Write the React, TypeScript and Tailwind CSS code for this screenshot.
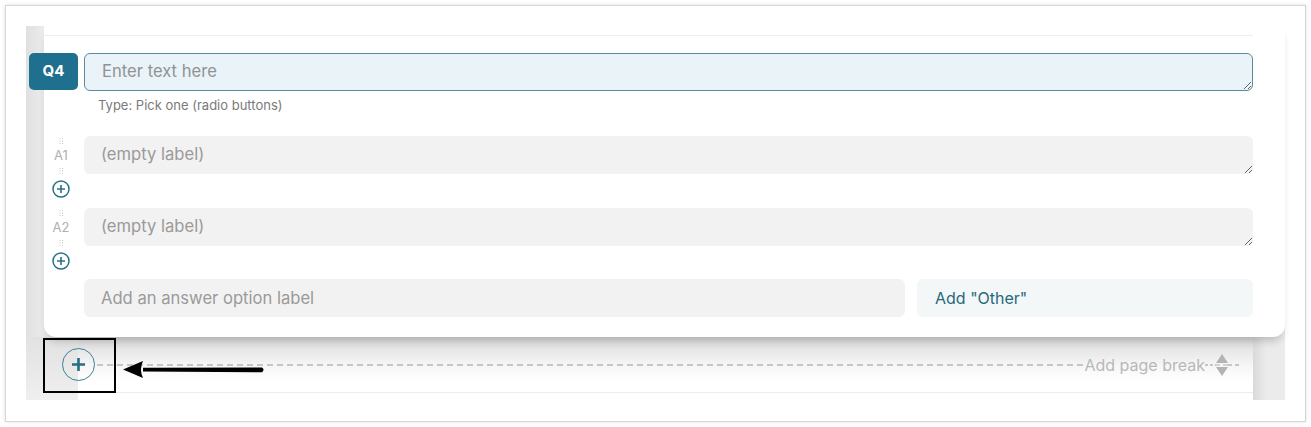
import React from "react";

const FONT = { fontFamily: "Inter, 'Liberation Sans', sans-serif" };

function Dots() {
  return (
    <svg width="5" height="6" viewBox="0 0 5 6" className="block">
      <rect x="0.5" y="0" width="1" height="1" fill="#c8c8c8" />
      <rect x="3" y="0" width="1" height="1" fill="#c8c8c8" />
      <rect x="0.5" y="2.5" width="1" height="1" fill="#c8c8c8" />
      <rect x="3" y="2.5" width="1" height="1" fill="#c8c8c8" />
      <rect x="0.5" y="5" width="1" height="1" fill="#c8c8c8" />
      <rect x="3" y="5" width="1" height="1" fill="#c8c8c8" />
    </svg>
  );
}

function SmallPlus() {
  return (
    <svg width="18" height="18" viewBox="0 0 18 18" className="block">
      <circle cx="9" cy="9" r="8" fill="none" stroke="#2a7186" strokeWidth="1.5" />
      <path d="M9 5v8M5 9h8" stroke="#2a7186" strokeWidth="1.6" />
    </svg>
  );
}

function AnswerRow({ label, first }: { label: string; first?: boolean }) {
  return (
    <div className={first ? "flex items-start mb-[10px]" : "flex items-start mb-[9px]"}>
      <div className="w-[34px] flex flex-col items-center pt-[2px]">
        <Dots />
        <div className="mt-[3px] text-[13px] leading-[16px] text-[#b0b0b0]">{label}</div>
        <div className="mt-[5px]">
          <Dots />
        </div>
        <div className="mt-[6px]">
          <SmallPlus />
        </div>
      </div>
      <textarea
        readOnly
        placeholder="(empty label)"
        className="ml-[6px] flex-1 h-[38px] rounded-[6px] bg-[#f2f2f2] px-[17px] pt-[8px] text-[16.6px] leading-[20px] text-[#555] placeholder:text-[#9a9a9a] outline-none overflow-hidden resize-y"
      />
    </div>
  );
}

export default function App() {
  return (
    <div className="w-[1311px] h-[427px] bg-white pt-[5px] pl-[5px]" style={FONT}>
      <div className="relative w-[1301px] h-[417px] border border-[#d6d6d6] shadow-[0_0_4px_rgba(0,0,0,0.12)] bg-white p-[20px]">
        <div className="w-[1259px] h-[374px] flex flex-col bg-[linear-gradient(to_right,#e0e0e0,#ececec_18px)]">
          {/* Card */}
          <div className="relative z-10 ml-[18px] w-[1241px] h-[311px] shrink-0 bg-white rounded-b-[12px] shadow-[0_7px_9px_-3px_rgba(0,0,0,0.2)] pr-[32px]">
            <div className="h-[10px] border-b border-[#ededed]" />
            <div className="flex items-start mt-[17px]">
              <div className="-ml-[15px] w-[49px] h-[37px] rounded-[5px] bg-[#1f6f8e] text-white font-bold text-[15px] flex items-center justify-center">
                Q4
              </div>
              <textarea
                readOnly
                placeholder="Enter text here"
                className="ml-[6px] flex-1 h-[38px] rounded-[6px] border border-[#5a8a9c] bg-[#eaf3f7] px-[17px] pt-[7px] text-[16.6px] leading-[20px] text-[#555] placeholder:text-[#8f9396] outline-none overflow-hidden resize-y"
              />
            </div>
            <div className="pl-[54px] mt-[6px] text-[13px] leading-[16px] text-[#7a7a7a]">
              Type: Pick one (radio buttons)
            </div>
            <div className="mt-[23px]">
              <AnswerRow label="A1" first />
              <AnswerRow label="A2" />
            </div>
            <div className="flex ml-[40px] gap-[12px]">
              <div className="w-[821px] h-[38px] rounded-[6px] bg-[#f2f2f2] px-[17px] flex items-center text-[16.6px] text-[#9a9a9a]">
                Add an answer option label
              </div>
              <div className="flex-1 h-[38px] rounded-[6px] bg-[#f4f7f7] px-[18px] flex items-center text-[16px] text-[#27697c]">
                Add "Other"
              </div>
            </div>
          </div>
          {/* Bottom page break row */}
          <div className="flex h-[63px]">
            <div className="w-[52px] bg-[linear-gradient(to_bottom,#e2e2e2,#efefef)]" />
            <div className="flex-1 bg-[linear-gradient(to_bottom,#dadada,#f6f6f6_45%,#ffffff_70%)]">
              <div className="h-[56px] border-b border-[#ececec] flex items-center pr-[13px]">
                <div className="-ml-[16px] w-[33px] h-[33px] rounded-full border border-[#3a8196] flex items-center justify-center">
                  <svg width="15" height="15" viewBox="0 0 15 15">
                    <path d="M7.5 1v13M1 7.5h13" stroke="#236e84" strokeWidth="2.6" />
                  </svg>
                </div>
                <div className="ml-[2px] flex-1 h-[2px] bg-[repeating-linear-gradient(to_right,#c6c6c6_0_6px,transparent_6px_10px)]" />
                <div className="text-[16px] text-[#b8b8b8] leading-[20px]">Add page break</div>
                <div className="w-[11px] h-[2px] bg-[repeating-linear-gradient(to_right,#c6c6c6_0_3px,transparent_3px_5px)]" />
                <svg width="12" height="24" viewBox="0 0 12 24" className="block">
                  <path d="M6 1L12 10H0Z" fill="#b3b3b3" />
                  <path d="M6 23L12 14H0Z" fill="#b3b3b3" />
                  <path d="M0 12h4M7 12h5" stroke="#c6c6c6" strokeWidth="1.5" />
                </svg>
                <div className="w-[12px] h-[2px] bg-[repeating-linear-gradient(to_right,#c6c6c6_0_4px,transparent_4px_7px)]" />
              </div>
            </div>
            <div className="w-[32px] bg-[linear-gradient(to_right,#d9d9d9,#ebebeb_40%)]" />
          </div>
        </div>

        {/* Annotation box */}
        <div className="absolute left-[37px] top-[332px] w-[73px] h-[55px] border-[2px] border-black pointer-events-none z-20" />
        {/* Annotation arrow */}
        <svg
          className="absolute left-[115px] top-[352px] z-20 pointer-events-none"
          width="145"
          height="24"
          viewBox="0 0 145 24"
        >
          <path d="M22 9.8 L141 9.6 Q144 11.8 141 14.2 L22 13.6 Z" fill="#000" />
          <path d="M2 11.5 L22 3 Q18 11.5 22 20 Z" fill="#000" />
        </svg>
      </div>
    </div>
  );
}
